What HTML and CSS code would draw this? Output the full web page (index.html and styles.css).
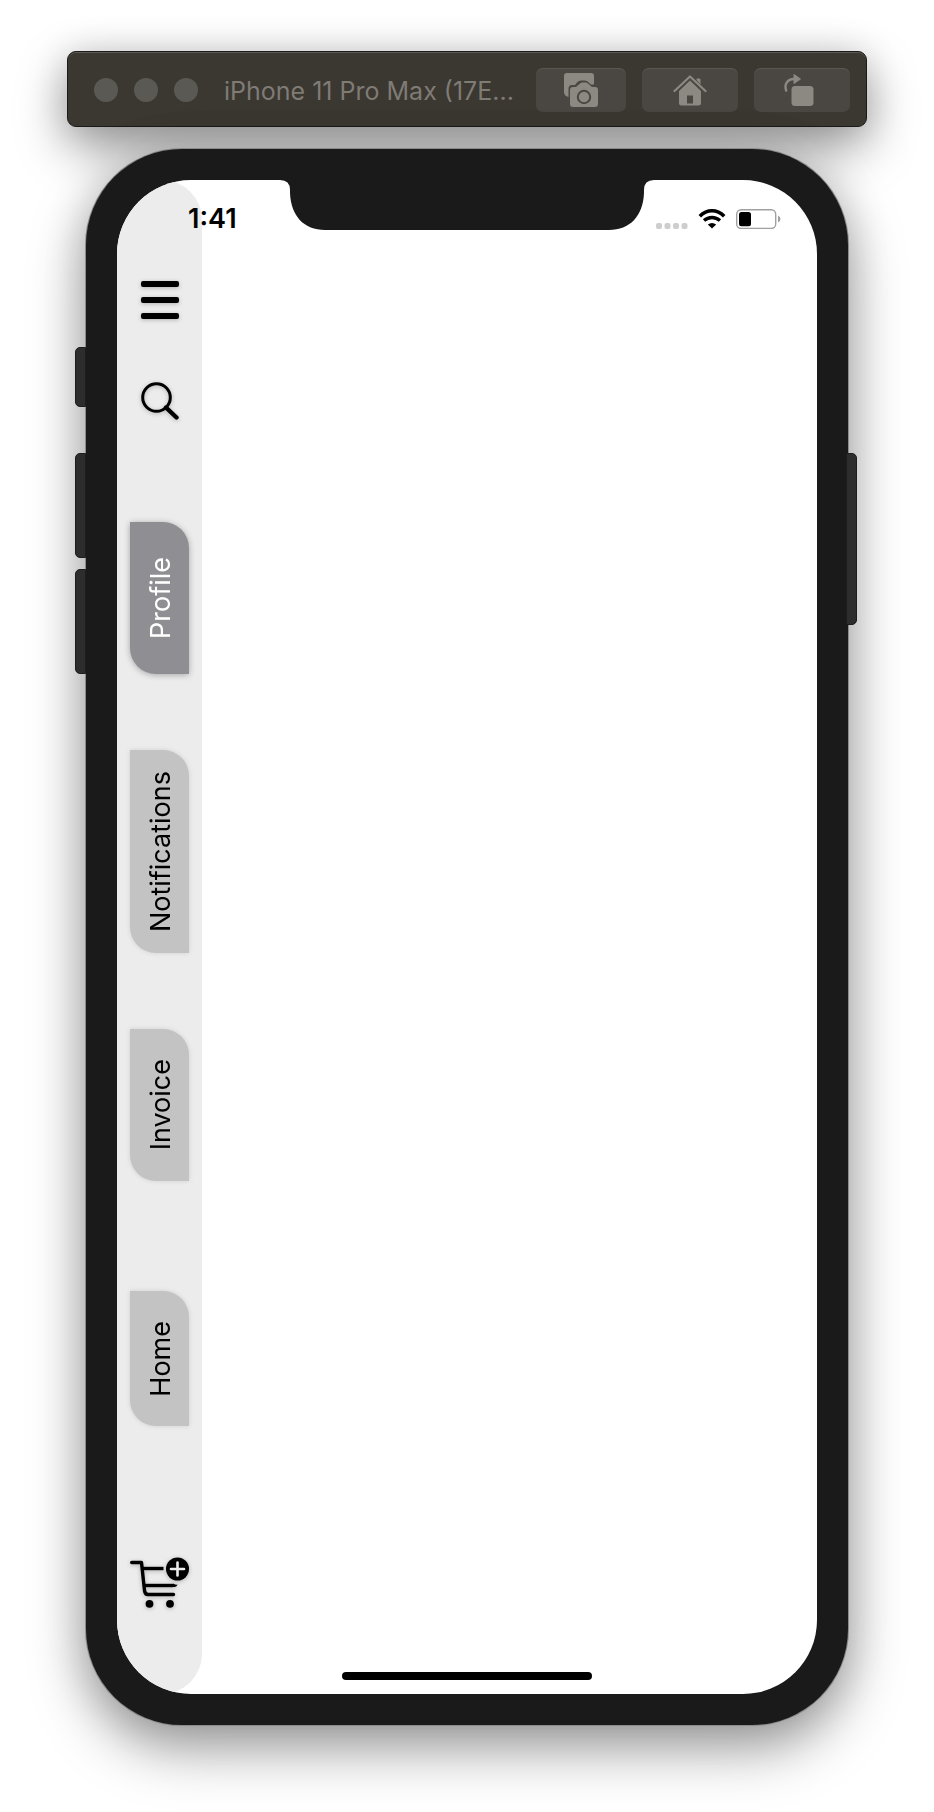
FILE: index.html
```html
<!DOCTYPE html>
<html lang="en">
<head>
<meta charset="utf-8">
<meta name="viewport" content="width=device-width, initial-scale=1">
<title>iPhone 11 Pro Max</title>
<link rel="stylesheet" href="styles.css">
</head>
<body>
<main class="stage">
  <header class="toolbar">
    <div class="lights"><span class="light"></span><span class="light"></span><span class="light"></span></div>
    <h1 class="title">iPhone 11 Pro Max (17E...</h1>
    <div class="tools">
      <button class="tool tool-small" type="button" aria-label="Screenshot">
        <svg width="34" height="34" viewBox="0 0 34 34">
          <path fill="#8c8882" d="M3 0H27a3 3 0 0 1 3 3V11.500H27L23.500 8.500Q22 7.500 20 7.500H17Q15 7.500 13.500 9L11 12H8Q4.500 12 4.500 16V24Q0 23 0 19V3a3 3 0 0 1 3-3Z"/>
          <path fill="#8c8882" fill-rule="evenodd" d="M9 14H12L16 10.500Q17 9.500 18.500 9.500H21.500Q23 9.500 24 10.500L28 14H31a3 3 0 0 1 3 3V31a3 3 0 0 1-3 3H9a3 3 0 0 1-3-3V17a3 3 0 0 1 3-3ZM20 16.800a7.200 7.200 0 1 0 0 14.400a7.200 7.200 0 1 0 0-14.400ZM20 18.800a5.200 5.200 0 1 1 0 10.400a5.200 5.200 0 1 1 0-10.400Z"/>
        </svg>
      </button>
      <button class="tool" type="button" aria-label="Home">
        <svg width="34" height="32" viewBox="0 0 34 32">
          <path fill="none" stroke="#8c8882" stroke-width="2.200" stroke-linecap="round" stroke-linejoin="round" d="M1.500 17L17 2.500L32.500 17"/>
          <path fill="#8c8882" d="M23.500 6V5.500a1 1 0 0 1 1-1H26.500a1 1 0 0 1 1 1V10.500Z"/>
          <path fill="#8c8882" fill-rule="evenodd" d="M17 6.500L28 17V29a2.500 2.500 0 0 1-2.500 2.500H8.500A2.500 2.500 0 0 1 6 29V17ZM14 21.500V29.500H20V21.500Z"/>
        </svg>
      </button>
      <button class="tool" type="button" aria-label="Rotate">
        <svg width="36" height="34" viewBox="0 0 36 34">
          <path fill="none" stroke="#8c8882" stroke-width="2.400" stroke-linecap="round" d="M2.200 17.500Q.500 12.500 2.800 9.500Q5 6 10 6"/>
          <path fill="#8c8882" stroke="#8c8882" stroke-linejoin="round" d="M10 1.500L16.500 6L10 10.500Z"/>
          <rect x="7.500" y="13" width="22" height="20" rx="3.500" fill="#8c8882"/>
        </svg>
      </button>
    </div>
  </header>

  <section class="phone">
    <i class="key key-mute"></i><i class="key key-up"></i><i class="key key-down"></i><i class="key key-power"></i>
    <div class="screen">
      <nav class="sidebar">
        <button class="icon-button" type="button" aria-label="Menu">
          <svg width="38" height="38" viewBox="0 0 38 38"><g><rect width="38" height="6" y="0" rx="2"/><rect width="38" height="6" y="16" rx="2"/><rect width="38" height="6" y="32" rx="2"/></g></svg>
        </button>
        <button class="icon-button search" type="button" aria-label="Search">
          <svg width="38" height="38" viewBox="0 0 38 38" fill="none" stroke="#000"><circle cx="15.500" cy="15.500" r="13.800" stroke-width="3"/><path d="M25 25.500L35.500 35.500" stroke-width="4.400" stroke-linecap="round"/></svg>
        </button>
        <div class="tabs">
          <button class="tab active" type="button"><span class="tab-label">Profile</span></button>
          <button class="tab long" type="button"><span class="tab-label">Notifications</span></button>
          <button class="tab" type="button"><span class="tab-label">Invoice</span></button>
          <button class="tab short" type="button"><span class="tab-label">Home</span></button>
        </div>
        <button class="icon-button" type="button" aria-label="Add to cart">
          <svg width="59" height="51" viewBox="0 0 59 51">
            <g fill="none" stroke="#000" stroke-width="3.400" stroke-linecap="round" stroke-linejoin="round">
              <path d="M1.700 5.500H11.500L14.500 33.500Q15 37.500 18 37.500H43.500"/>
              <path d="M12.500 11.500H33.500" stroke-linecap="butt"/>
              <path d="M14 28.500H43" stroke-linecap="butt"/>
            </g>
            <path d="M43 26.500Q45 28 47.500 27.500Q47 30 43 30.100Z"/>
            <circle cx="19.500" cy="46.800" r="3.900"/><circle cx="40" cy="46.800" r="3.900"/>
            <circle cx="47.500" cy="12" r="11.500"/>
            <path d="M47.500 5.500V18.500M41 12H54" fill="none" stroke="#ededed" stroke-width="2.600" stroke-linecap="round"/>
          </svg>
        </button>
      </nav>
      <div class="content"></div>
      <svg class="notch" width="374" height="50" viewBox="0 0 374 50"><path fill="#1a1a1a" d="M0 0H374Q364 0 364 10V13C363 36 350 50 329 50H45C24 50 11 36 10 13V10Q10 0 0 0Z"/></svg>
      <div class="status">
        <time class="clock">1:41</time>
        <div class="indicators">
          <svg width="32" height="20" viewBox="0 0 32 20" fill="#cecece"><rect x="0" y="14" width="6" height="6" rx="2"/><rect x="8.500" y="14" width="6" height="6" rx="2"/><rect x="17" y="14" width="6" height="6" rx="2"/><rect x="25.500" y="14" width="6" height="6" rx="2"/></svg>
          <svg width="28" height="20" viewBox="0 0 28 20" fill="none" stroke="#000"><path stroke-width="3.600" d="M1.800 7.200Q7.300 1.800 14 1.800T26.200 7.200"/><path stroke-width="3.400" d="M6 11.600Q9.500 8.500 14 8.500T22 11.600"/><path fill="#000" stroke="none" d="M14 19.500L9.800 15.500Q14 12.300 18.200 15.500Z"/></svg>
          <svg width="46" height="20" viewBox="0 0 46 20"><rect x=".700" y=".700" width="39" height="18.800" rx="4.500" fill="#fff" stroke="#a0a0a0" stroke-width="1.400"/><rect x="3" y="3" width="12" height="14.200" rx="2.500"/><path fill="#a0a0a0" d="M42 6.500Q44.500 7.500 44.500 10T42 13.500Z"/></svg>
        </div>
      </div>
      <div class="home-bar"></div>
    </div>
  </section>
</main>
</body>
</html>
```
FILE: styles.css
```css
* {
  box-sizing: border-box;
}

body {
  margin: 0;
  background: #fff;
  color: #000;
  font-family: Inter, Roboto, "Liberation Sans", sans-serif;
}

button {
  margin: 0;
  padding: 0;
  border: 0;
  font: inherit;
  color: inherit;
}

svg {
  display: block;
}

.stage {
  display: flex;
  flex-direction: column;
  gap: 22px;
  padding: 51px 67px 86px;
  overflow: hidden;
}

.toolbar {
  display: flex;
  align-items: center;
  height: 76px;
  padding: 2px 16px 0 26px;
  border: 1px solid #1b1a18;
  border-radius: 9px;
  background: #3b3731;
  box-shadow: inset 0 1px 0 #5c5a57, 0 20px 50px rgba(0, 0, 0, 0.4), 0 0 36px rgba(0, 0, 0, 0.12);
}

.lights {
  display: flex;
  gap: 16px;
}

.light {
  width: 24px;
  height: 24px;
  border-radius: 50%;
  background: #5b5954;
}

.title {
  flex: 1;
  margin: 0 0 0 26px;
  padding-top: 2px;
  color: #7f7b75;
  font-size: 25px;
  font-weight: 400;
  line-height: 32px;
  white-space: nowrap;
}

.tools {
  display: flex;
  gap: 16px;
}

.tool {
  display: flex;
  align-items: center;
  justify-content: center;
  width: 96px;
  height: 44px;
  border-radius: 7px;
  background: #4a4641;
  box-shadow: inset 0 1px 0 #595550;
}

.tool-small {
  width: 90px;
}

.phone {
  position: relative;
  margin: 0 19px;
  padding: 31px;
  border-radius: 96px;
  background: #1a1a1a;
  box-shadow: 0 0 0 1px #8b8b8b, 0 24px 56px rgba(0, 0, 0, 0.38), 0 0 44px rgba(0, 0, 0, 0.14);
}

.key {
  position: absolute;
  left: -11px;
  width: 11px;
  border: 1px solid #1d1d1d;
  border-radius: 5px 0 0 5px;
  background: #2d2d2d;
}

.key-mute {
  top: 198px;
  height: 60px;
}

.key-up {
  top: 304px;
  height: 105px;
}

.key-down {
  top: 420px;
  height: 105px;
}

.key-power {
  top: 304px;
  right: -9px;
  left: auto;
  height: 172px;
  border-radius: 0 5px 5px 0;
}

.screen {
  position: relative;
  display: flex;
  overflow: hidden;
  border-radius: 74px;
  background: #fff;
}

.sidebar {
  display: flex;
  flex-direction: column;
  align-items: center;
  width: 85px;
  padding: 101px 0 86px;
  border-radius: 0 40px 40px 0;
  background: #ececec;
}

.content {
  flex: 1;
}

.icon-button {
  background: none;
  filter: drop-shadow(0 1px 2px rgba(0, 0, 0, 0.25));
}

.search {
  margin-top: 63px;
}

.tabs {
  display: flex;
  flex-direction: column;
  gap: 76px;
  margin: 102px 0 131px;
}

.tab {
  display: flex;
  align-items: center;
  justify-content: center;
  width: 59px;
  height: 152px;
  padding-left: 3px;
  border-radius: 0 26px;
  background: #c3c3c3;
  box-shadow: 0 0 5px rgba(0, 0, 0, 0.12);
}

.tab.active {
  background: #8f8e93;
  color: #fff;
  box-shadow: 0 1px 6px rgba(0, 0, 0, 0.3);
}

.tab.long {
  height: 203px;
}

.tab.short {
  height: 135px;
  margin-top: 34px;
}

.tab-label {
  font-size: 27px;
  line-height: 32px;
  writing-mode: vertical-rl;
  transform: rotate(180deg);
}

.notch {
  position: absolute;
  top: 0;
  left: 50%;
  margin-left: -187px;
}

.status {
  position: absolute;
  top: 22px;
  right: 35px;
  left: 71px;
  display: flex;
  align-items: center;
  justify-content: space-between;
}

.clock {
  padding-top: 1px;
  font-size: 27px;
  font-weight: 600;
  line-height: 32px;
}

.indicators {
  display: flex;
  align-items: center;
  gap: 10px;
}

.home-bar {
  position: absolute;
  bottom: 14px;
  left: 50%;
  width: 250px;
  height: 8px;
  margin-left: -125px;
  border-radius: 4px;
  background: #000;
}
```
